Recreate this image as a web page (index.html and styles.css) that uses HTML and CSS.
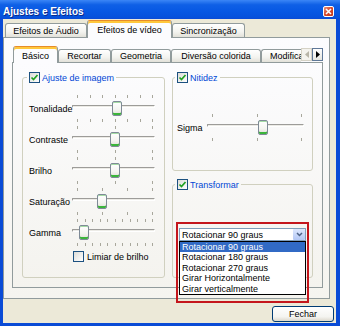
FILE: index.html
```html
<!DOCTYPE html>
<html>
<head>
    <title>Ajustes e Efeitos</title>
    <link rel="stylesheet" href="styles.css">
</head>
<body>
    <div class="window">
        <div class="titlebar">
            <span>Ajustes e Efeitos</span>
            <span class="close-btn">
                <svg width="7" height="7" viewBox="0 0 7 7"><path d="M1 1L6 6M6 1L1 6" stroke="#fff" stroke-width="1.6"/></svg>
            </span>
        </div>
        <div class="client">
            <div class="tabs outer-tabs">
                <div class="tab tab-audio">Efeitos de Áudio</div>
                <div class="tab tab-video selected">Efeitos de vídeo</div>
                <div class="tab tab-sync">Sincronização</div>
            </div>
            <div class="outer-panel">
                <div class="tabs inner-tabs">
                    <div class="tab tab-basico selected">Básico</div>
                    <div class="tab tab-recortar">Recortar</div>
                    <div class="tab tab-geometria">Geometria</div>
                    <div class="tab tab-diversao">Diversão colorida</div>
                    <div class="tab tab-modific">Modificações</div>
                    <div class="scroll-arrows">
                        <span class="arrow-btn disabled">
                            <svg width="4" height="7" viewBox="0 0 4 7"><polygon points="4,0 4,7 0,3.5" fill="#B8B5A8"/></svg>
                        </span>
                        <span class="arrow-btn">
                            <svg width="4" height="7" viewBox="0 0 4 7"><polygon points="0,0 0,7 4,3.5" fill="#000"/></svg>
                        </span>
                    </div>
                </div>
                <div class="inner-panel">
                    <!-- Ajuste de imagem -->
                    <fieldset class="group group-left">
                        <legend>
                            <span class="checkbox checked"><svg width="9" height="9" viewBox="0 0 9 9"><path d="M1.5 4.5L3.5 6.5L7.5 2" stroke="#21A121" stroke-width="1.7" fill="none"/></svg></span>
                            Ajuste de imagem
                        </legend>
                        <div class="slider-row">
                            <span class="slider-label">Tonalidade</span>
                            <div class="slider">
                                <div class="ticks"><i></i><i></i><i></i><i></i><i></i><i></i><i></i></div>
                                <div class="track"></div>
                                <div class="thumb" style="left: 40px"></div>
                                <div class="ticks bottom"><i></i><i></i><i></i><i></i><i></i><i></i><i></i></div>
                            </div>
                        </div>
                        <div class="slider-row">
                            <span class="slider-label">Contraste</span>
                            <div class="slider">
                                <div class="ticks"><i></i><i></i><i></i></div>
                                <div class="track"></div>
                                <div class="thumb" style="left: 38px"></div>
                                <div class="ticks bottom"><i></i><i></i><i></i></div>
                            </div>
                        </div>
                        <div class="slider-row">
                            <span class="slider-label">Brilho</span>
                            <div class="slider">
                                <div class="ticks"><i></i><i></i><i></i></div>
                                <div class="track"></div>
                                <div class="thumb" style="left: 38px"></div>
                                <div class="ticks bottom"><i></i><i></i><i></i></div>
                            </div>
                        </div>
                        <div class="slider-row">
                            <span class="slider-label">Saturação</span>
                            <div class="slider">
                                <div class="ticks"><i></i><i></i><i></i><i></i></div>
                                <div class="track"></div>
                                <div class="thumb" style="left: 25px"></div>
                                <div class="ticks bottom"><i></i><i></i><i></i><i></i></div>
                            </div>
                        </div>
                        <div class="slider-row">
                            <span class="slider-label">Gamma</span>
                            <div class="slider">
                                <div class="ticks"><i></i><i></i><i></i><i></i><i></i><i></i><i></i><i></i><i></i><i></i><i></i></div>
                                <div class="track"></div>
                                <div class="thumb" style="left: 7px"></div>
                                <div class="ticks bottom"><i></i><i></i><i></i><i></i><i></i><i></i><i></i><i></i><i></i><i></i><i></i></div>
                            </div>
                        </div>
                        <div class="check-row">
                            <span class="checkbox"></span>
                            Limiar de brilho
                        </div>
                    </fieldset>

                    <div class="right-col">
                        <!-- Nitidez -->
                        <fieldset class="group group-nitidez">
                            <legend>
                                <span class="checkbox checked"><svg width="9" height="9" viewBox="0 0 9 9"><path d="M1.5 4.5L3.5 6.5L7.5 2" stroke="#21A121" stroke-width="1.7" fill="none"/></svg></span>
                                Nitidez
                            </legend>
                            <div class="slider-row">
                                <span class="slider-label sigma">Sigma</span>
                                <div class="slider wide">
                                    <div class="ticks"><i></i><i></i><i></i></div>
                                    <div class="track"></div>
                                    <div class="thumb" style="left: 51px"></div>
                                    <div class="ticks bottom"><i></i><i></i><i></i></div>
                                </div>
                            </div>
                        </fieldset>

                        <!-- Transformar -->
                        <fieldset class="group group-transform">
                            <legend>
                                <span class="checkbox checked"><svg width="9" height="9" viewBox="0 0 9 9"><path d="M1.5 4.5L3.5 6.5L7.5 2" stroke="#21A121" stroke-width="1.7" fill="none"/></svg></span>
                                Transformar
                            </legend>
                            <div class="combo-wrap">
                                <div class="combo">
                                    <span>Rotacionar 90 graus</span>
                                    <span class="combo-btn">
                                        <svg width="7" height="5" viewBox="0 0 7 5"><path d="M1 1L3.5 3.5L6 1" stroke="#4D6185" stroke-width="1.5" fill="none"/></svg>
                                    </span>
                                </div>
                                <div class="dropdown-list">
                                    <div class="item selected">Rotacionar 90 graus</div>
                                    <div class="item">Rotacionar 180 graus</div>
                                    <div class="item">Rotacionar 270 graus</div>
                                    <div class="item">Girar Horizontalmente</div>
                                    <div class="item">Girar verticalmente</div>
                                </div>
                                <div class="highlight"></div>
                            </div>
                        </fieldset>
                    </div>
                </div>
            </div>
            <div class="footer">
                <button class="btn">Fechar</button>
            </div>
        </div>
    </div>
</body>
</html>
```

FILE: styles.css
```css
* {
    box-sizing: border-box;
}

body {
    margin: 0;
    font-family: "Liberation Sans", Arial, sans-serif;
    font-size: 9px;
    color: #000;
}

/* Window frame */
.window {
    width: 340px;
    height: 326px;
    display: flex;
    flex-direction: column;
    padding: 0 4px 3px 3px;
    background: #0A4BD6;
}

.titlebar {
    height: 19px;
    margin: 0 -4px 0 -3px;
    padding: 3px 6px 0 3px;
    display: flex;
    align-items: center;
    justify-content: space-between;
    background: linear-gradient(#3B86F6, #0F60E6 25%, #0758E3 60%, #0652DC 90%, #0A4BD6);
    color: #fff;
    font-weight: bold;
    font-size: 10px;
    text-shadow: 1px 1px #0A2A8A;
}

.close-btn {
    width: 11px;
    height: 11px;
    border: 1px solid #fff;
    border-radius: 2px;
    background: linear-gradient(135deg, #E8917A, #D7482A 50%, #C23A1E);
    display: flex;
    align-items: center;
    justify-content: center;
}

.client {
    flex: 1;
    display: flex;
    flex-direction: column;
    background: #ECE9D8;
}

/* Tabs */
.tabs {
    display: flex;
    align-items: flex-end;
}

.outer-tabs {
    height: 18px;
    padding-left: 2px;
}

.tab {
    height: 14px;
    border: 1px solid #919B9C;
    border-bottom: none;
    border-radius: 3px 3px 0 0;
    background: linear-gradient(#FFFFFF, #F3F3EF 60%, #E2E1D9);
    display: flex;
    align-items: center;
    justify-content: center;
    white-space: nowrap;
}

.tab.selected {
    position: relative;
    z-index: 1;
    height: 18px;
    margin-bottom: -1px;
    padding-top: 1px;
    background: #FCFCFE;
    border-top: 1px solid #E68B2C;
    box-shadow: inset 0 2px 0 #FFC83C;
}

.tab-audio { width: 82px; }
.tab-video { width: 85px; }
.tab-sync { width: 73px; }

.outer-panel {
    height: 262px;
    margin-right: 6px;
    border: 1px solid #919B9C;
    padding: 7px 6px 10px 8px;
    background: linear-gradient(#FCFCFE, #F5F4EF);
}

.inner-tabs {
    height: 17px;
    padding-left: 1px;
}

.inner-tabs .tab {
    height: 13px;
}

.inner-tabs .tab.selected {
    height: 17px;
}

.tab-basico { width: 45px; }
.tab-recortar { width: 53px; }
.tab-geometria { width: 60px; }
.tab-diversao { width: 90px; }

.tab-modific {
    width: 40px;
    justify-content: flex-start;
    padding-left: 8px;
    overflow: hidden;
    border-right: none;
    border-radius: 3px 0 0 0;
}

.scroll-arrows {
    display: flex;
    height: 13px;
    margin-bottom: 1px;
}

.arrow-btn {
    width: 11px;
    height: 13px;
    display: flex;
    align-items: center;
    justify-content: center;
    border: 1px solid #5F7898;
    background: linear-gradient(#FFFFFF, #E6E6E0);
}

.arrow-btn.disabled {
    border-color: #D5D2C6;
    background: #F4F3EE;
}

.inner-panel {
    height: 226px;
    border: 1px solid #919B9C;
    padding: 9px;
    background: linear-gradient(#FCFCFE, #F4F3EE);
    display: grid;
    grid-template-columns: 143px 141px;
    column-gap: 7px;
}

/* Group boxes */
.group {
    margin: 0;
    min-width: 0;
    border: 1px solid #D0D0BF;
    border-radius: 3px;
    padding: 10px 4px 0 6px;
}

.group legend {
    display: flex;
    align-items: center;
    gap: 2px;
    height: 11px;
    margin-left: -2px;
    padding: 0 2px;
    color: #0046D5;
}

.right-col {
    display: flex;
    flex-direction: column;
    gap: 8px;
}

.group-nitidez {
    height: 99px;
    padding: 29px 4px 0 4px;
}

.group-transform {
    height: 99px;
    padding: 38px 4px 0 4px;
}

.checkbox {
    width: 11px;
    height: 11px;
    border: 1px solid #1C5180;
    background: linear-gradient(135deg, #DCDCD7, #FFFFFF);
    display: inline-flex;
    align-items: center;
    justify-content: center;
    flex-shrink: 0;
}

.check-row {
    display: flex;
    align-items: center;
    gap: 3px;
    height: 11px;
    margin-top: 3px;
    padding-left: 44px;
}

/* Sliders */
.slider-row {
    display: flex;
    align-items: center;
    height: 31px;
}

.slider-label {
    width: 43px;
    flex-shrink: 0;
    white-space: nowrap;
}

.slider-label.sigma {
    width: 30px;
}

.slider {
    position: relative;
    width: 86px;
    height: 31px;
}

.slider.wide {
    width: 100px;
}

.ticks {
    display: flex;
    justify-content: space-between;
    height: 3px;
    margin: 2px 5px 0 5px;
}

.ticks i {
    width: 1px;
    height: 3px;
    background: #A8A79C;
}

.ticks.bottom {
    margin-top: 11px;
}

.track {
    height: 3px;
    margin: 7px 3px 0 0;
    border: 1px solid;
    border-color: #9D9C99 #FFFFFF #FFFFFF #9D9C99;
    border-radius: 1px;
    background: #ECEBE6;
}

.thumb {
    position: absolute;
    top: 8px;
    width: 10px;
    height: 15px;
    border: 1px solid #7E8A96;
    border-radius: 2px;
    background: linear-gradient(#FFFFFF, #F4F4F0 60%, #DEDDD5);
    box-shadow: inset 0 -2px 0 #3BB53B, inset 0 1px 0 #A5DCA5;
}

/* Combo box */
.combo-wrap {
    position: relative;
    width: 127px;
    margin-left: 2px;
}

.combo {
    height: 13px;
    border: 1px solid #7F9DB9;
    background: #fff;
    display: flex;
    align-items: center;
    justify-content: space-between;
    padding-left: 2px;
}

.combo-btn {
    width: 12px;
    height: 11px;
    display: flex;
    align-items: center;
    justify-content: center;
    border-radius: 1px;
    background: linear-gradient(#DDE7FD, #B3C7F5);
}

.dropdown-list {
    position: absolute;
    top: 13px;
    left: 0;
    width: 127px;
    border: 1px solid #000;
    background: #fff;
}

.item {
    height: 10.4px;
    line-height: 10.4px;
    padding-left: 2px;
    white-space: nowrap;
}

.item.selected {
    background: #316AC5;
    color: #fff;
}

.highlight {
    position: absolute;
    left: -3px;
    top: -6px;
    width: 133px;
    height: 81px;
    border: 2px solid #C4161C;
}

/* Footer */
.footer {
    flex: 1;
    display: flex;
    justify-content: flex-end;
    align-items: flex-start;
    padding: 7px 2px 0 0;
}

.btn {
    width: 62px;
    height: 16px;
    padding: 0;
    border: 1px solid #003C74;
    border-radius: 3px;
    background: linear-gradient(#FFFFFF, #F4F4F0 70%, #DCD8CC);
    font: inherit;
    color: #000;
}
```
